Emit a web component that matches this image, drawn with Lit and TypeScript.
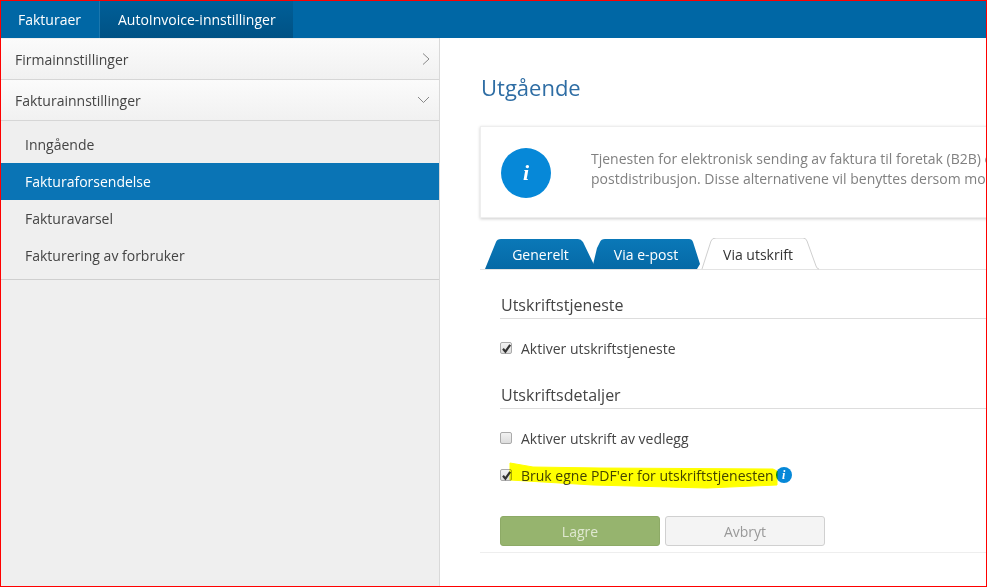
import { LitElement, html, css, svg } from "lit";
import { customElement } from "lit/decorators.js";

const check = html`<svg class="tick" viewBox="0 0 13 13"><path d="M3 6.8 5.4 9.6 10.2 2.8" fill="none" stroke="#333" stroke-width="2.2"/></svg>`;

@customElement("app-root")
export class AppRoot extends LitElement {
  static styles = css`
    :host {
      display: flex; flex-direction: column; box-sizing: border-box;
      width: 987px; height: 587px; border: 1px solid #f00;
      overflow: hidden; background: #fff; color: #333;
      font-family: "Open Sans", "DejaVu Sans", sans-serif; font-size: 14px;
    }
    .top { display: flex; height: 37px; flex: none; background: #0067a5; color: #fff; }
    .top div { display: flex; align-items: center; }
    .t1 { width: 99px; padding-left: 17px; box-sizing: border-box; border-right: 1px solid #1b77ae; }
    .t2 { width: 193px; padding-left: 18px; box-sizing: border-box; background: linear-gradient(#005f98, #005285); }
    .body { display: flex; flex: 1; min-height: 0; }
    aside { width: 439px; flex: none; box-sizing: border-box; background: #efefef; border-right: 1px solid #d9d9d9; padding-top: 1px; }
    .acc { display: flex; justify-content: space-between; align-items: center; height: 41px; box-sizing: border-box;
      padding: 0 9px 0 14px; background: linear-gradient(#fbfbfb, #f1f1f1); border-bottom: 1px solid #d6d6d6; color: #444; }
    .acc svg { width: 12px; height: 12px; }
    .list { padding: 5px 0; border-bottom: 1px solid #cfcfcf; }
    .item { height: 37px; display: flex; align-items: center; padding-left: 24px; color: #444; }
    .item.on { background: #0a74b5; color: #fff; }
    main { flex: 1; min-width: 0; padding: 0 0 0 40px; overflow: hidden; }
    h1 { margin: 34px 0 24px 1px; font-size: 22px; line-height: 30px; font-weight: 400; color: #2e6da4; }
    .info { display: flex; align-items: center; height: 92px; box-sizing: border-box; margin-right: -20px;
      border: 1px solid #eee; box-shadow: 0 1px 3px rgba(0,0,0,.2); padding-left: 20px; color: #808080; background: #fff; }
    .circle { width: 50px; height: 50px; flex: none; border-radius: 50%; background: #0688d8; color: #fff; display: flex;
      align-items: center; justify-content: center; font: italic 700 22px "Liberation Serif", serif; margin: 2px 40px 0 0; }
    .info p { margin: -7px 0 0; line-height: 20px; white-space: nowrap; }
    .tabs { display: flex; height: 31px; margin-top: 20px; border-bottom: 1px solid #e3e3e3; }
    .tab { position: relative; height: 32px; display: flex; align-items: center; justify-content: center; color: #fff; box-sizing: border-box; }
    .tab svg { position: absolute; inset: 0; width: 100%; height: 100%; }
    .tab span { position: relative; }
    .tab.a { width: 113px; margin-left: 4px; }
    .tab.b { width: 108px; margin-left: -5px; }
    .tab.c { width: 118px; margin-left: 1px; padding-right: 4px; color: #333; }
    .form { padding-left: 20px; }
    h2 { margin: 0; padding: 0 0 2px 1px; font-size: 16px; line-height: 22px; font-weight: 400; color: #444; border-bottom: 1px solid #ddd; }
    .sec1 { margin-top: 24px; }
    .sec2 { margin-top: 26px; }
    .row { display: flex; align-items: center; height: 20px; color: #444; gap: 9px; position: relative; }
    .box { width: 12px; height: 12px; box-sizing: border-box; border: 1px solid #aaa; border-radius: 2px; background: linear-gradient(#f2f2f2, #ddd); flex: none; position: relative; }
    .tick { position: absolute; left: -1px; top: -1px; width: 13px; height: 13px; }
    .r1, .r2 { margin-top: 19px; }
    .r3 { margin-top: 17px; }
    .label { position: relative; }
    .mark { position: absolute; left: -12px; top: -8px; width: 270px; height: 34px; mix-blend-mode: multiply; }
    .dot { width: 16px; height: 16px; margin-left: -7px; border-radius: 50%; background: #0688d8; color: #fff; display: flex; align-items: center; justify-content: center;
      font: italic 700 12px "Liberation Serif", serif; flex: none; }
    .btns { display: flex; gap: 5px; margin-top: 31px; padding-bottom: 6px; }
    .btn { width: 160px; height: 30px; box-sizing: border-box; border-radius: 3px; display: flex; align-items: center; justify-content: center; }
    .save { background: #96b46e; border: 1px solid #8daa66; color: #dfe8d0; }
    .cancel { background: #f4f4f4; border: 1px solid #d0d0d0; color: #999; }
    .end { border-top: 1px solid #eee; }
  `;

  render() {
    return html`
      <div class="top"><div class="t1">Fakturaer</div><div class="t2">AutoInvoice-innstillinger</div></div>
      <div class="body">
        <aside>
          <div class="acc">Firmainnstillinger
            <svg viewBox="0 0 12 12"><path d="M5 .5 11 6 5 11.5" fill="none" stroke="#888"/></svg></div>
          <div class="acc">Fakturainnstillinger
            <svg viewBox="0 0 12 12"><path d="M0 3 5.5 8.5 11 3" fill="none" stroke="#888"/></svg></div>
          <div class="list">
            <div class="item">Inngående</div>
            <div class="item on">Fakturaforsendelse</div>
            <div class="item">Fakturavarsel</div>
            <div class="item">Fakturering av forbruker</div>
          </div>
        </aside>
        <main>
          <h1>Utgående</h1>
          <div class="info">
            <div class="circle">i</div>
            <p>Tjenesten for elektronisk sending av faktura til foretak (B2B) er aktivert som standard, med mulighet for<br>postdistribusjon. Disse alternativene vil benyttes dersom mottakeren ikke kan motta elektronisk faktura.</p>
          </div>
          <div class="tabs">
            <div class="tab a">
              <svg viewBox="0 0 113 32" preserveAspectRatio="none"><defs><linearGradient id="g" x1="0" y1="0" x2="0" y2="1"><stop offset="0" stop-color="#0a78b8"/><stop offset="1" stop-color="#0669a6"/></linearGradient></defs>
                <path d="M1 31 12 4Q13 1 17 1H94Q97 1 99 4L112 31Z" fill="url(#g)"/></svg>
              <span>Generelt</span></div>
            <div class="tab b">
              <svg viewBox="0 0 108 32" preserveAspectRatio="none"><path d="M0 31 5 10 8 4Q9 1 13 1H97Q100 1 101 4L108 26 105 31Z" fill="url(#g)"/></svg>
              <span>Via e-post</span></div>
            <div class="tab c">
              <svg viewBox="0 0 118 32" preserveAspectRatio="none"><path d="M1 31 10 3Q11 0 15 0H102Q105 0 106 3L115 28Q116 31 118 31" fill="#fff" stroke="#cfcfcf"/></svg>
              <span>Via utskrift</span></div>
          </div>
          <div class="form">
            <h2 class="sec1">Utskriftstjeneste</h2>
            <div class="row r1"><span class="box">${check}</span>Aktiver utskriftstjeneste</div>
            <h2 class="sec2">Utskriftsdetaljer</h2>
            <div class="row r2"><span class="box"></span>Aktiver utskrift av vedlegg</div>
            <div class="row r3"><span class="box">${check}</span>
              <span class="label">Bruk egne PDF'er for utskriftstjenesten
                <svg class="mark" viewBox="0 0 270 34">${svg`<path d="M1 5 L24 9 L91 10 L264 11 L268 13 L268 27 L198 30 L84 27 L1 22Z" fill="#ffff00" stroke="#ffff00" stroke-width="1" stroke-linejoin="round"/>`}</svg>
              </span>
              <span class="dot">i</span></div>
            <div class="btns"><div class="btn save">Lagre</div><div class="btn cancel">Avbryt</div></div>
          </div>
          <div class="end"></div>
        </main>
      </div>
    `;
  }
}
